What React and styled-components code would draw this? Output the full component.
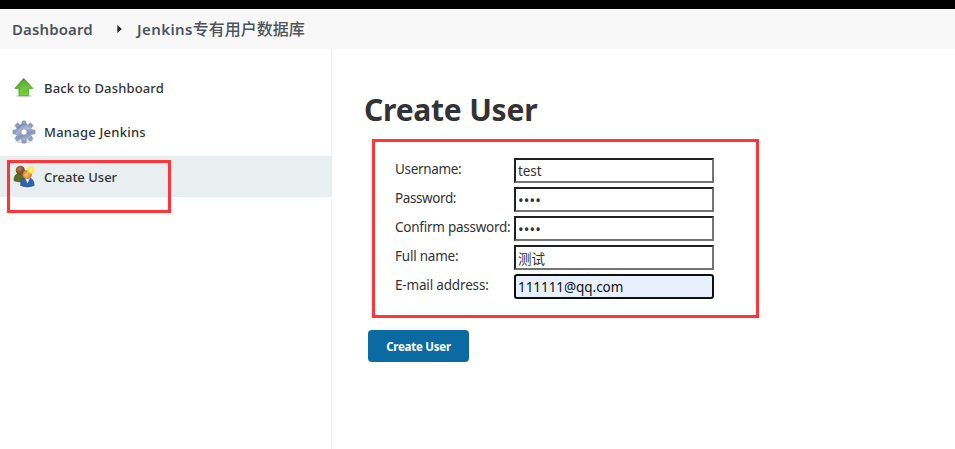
import React from "react";
import styled, { createGlobalStyle } from "styled-components";

const GlobalStyle = createGlobalStyle`
  * { box-sizing: border-box; }
  body {
    margin: 0;
    background: #fff;
    color: #333;
    font-family: "Noto Sans", "Noto Sans CJK SC", sans-serif;
    overflow: hidden;
  }
`;

const Page = styled.div`
  display: flex;
  flex-direction: column;
  height: 449px;
`;

const TopBar = styled.div`
  height: 9px;
  flex: none;
  background: #000;
`;

const Breadcrumbs = styled.nav`
  display: flex;
  align-items: center;
  flex: none;
  height: 40px;
  padding-left: 12px;
  background: #f8f8f8;
  color: #4d545d;
`;

const Crumb = styled.span`
  display: flex;
  width: ${(p) => p.$width}px;
  font-size: 15px;
  font-weight: 600;
  line-height: 20px;
  letter-spacing: ${(p) => p.$spacing || 0}px;
  white-space: nowrap;
`;

const CrumbCjk = styled.span`
  font-family: "Noto Sans CJK SC", sans-serif;
  font-size: 16px;
  font-weight: 500;
  line-height: 18px;
  letter-spacing: 0;
`;

const CrumbArrow = styled.svg`
  flex: none;
  width: 5px;
  height: 8px;
  margin: 0 15px 0 24px;
`;

const Body = styled.div`
  display: flex;
  flex: 1;
`;

const Sidebar = styled.aside`
  width: 332px;
  padding-top: 18px;
  border-right: 1px solid #ececec;
`;

const Task = styled.a`
  position: relative;
  display: flex;
  align-items: center;
  height: 41px;
  margin-bottom: ${(p) => p.$gap || 0}px;
  padding-left: 12px;
  background: ${(p) => (p.$active ? "#e9eef1" : "transparent")};
`;

const TaskIcon = styled.svg`
  flex: none;
  width: 24px;
  height: 24px;
  margin-right: 8px;
`;

const TaskText = styled.span`
  font-size: 13px;
  font-weight: 500;
  line-height: 20px;
  letter-spacing: ${(p) => p.$spacing || 0}px;
`;

const Marker = styled.div`
  position: absolute;
  left: 7px;
  top: 4px;
  width: 164px;
  height: 53px;
  border: 3px solid #ff3538;
`;

const Main = styled.main`
  flex: 1;
  padding: 38px 0 0 32px;
`;

const Title = styled.h1`
  margin: 0 0 6px;
  font-size: 30px;
  font-weight: 700;
  line-height: 46px;
  letter-spacing: -0.22px;
`;

const Form = styled.form`
  width: 387px;
  height: 179px;
  margin-left: 8px;
  padding: 16px 0 0 20px;
  border: 3px solid #ff3538;
`;

const Field = styled.label`
  display: grid;
  grid-template-columns: 119px 200px;
  height: 29px;
`;

const FieldLabel = styled.span`
  font-size: 13.5px;
  line-height: 22px;
  letter-spacing: ${(p) => p.$spacing || 0}px;
  white-space: nowrap;
`;

const Input = styled.input`
  width: 200px;
  height: 25px;
  padding: 0 2px;
  border: 2px solid;
  border-color: #202124 #747474 #747474 #202124;
  border-radius: 0;
  outline: none;
  background: #fff;
  color: #333;
  font: 400 13.5px "Noto Sans", "Noto Sans CJK SC", sans-serif;
  letter-spacing: ${(p) => p.$spacing || 0}px;
  &[type="password"] {
    font-size: 15px;
    letter-spacing: 0.1px;
  }
  ${(p) =>
    p.$focused &&
    `
    background: #e8f0fe;
    border-color: #101010;
    border-radius: 3px;
    color: #111;
  `}
`;

const SubmitButton = styled.button`
  width: 101px;
  height: 32px;
  margin: 12px 0 0 4px;
  padding: 1px 0 0;
  border: 0;
  border-radius: 4px;
  background: #0b6aa2;
  color: #fff;
  font: 700 11.5px "Noto Sans", sans-serif;
  letter-spacing: -0.25px;
`;

const UpArrowIcon = () => (
  <TaskIcon viewBox="0 0 24 24">
    <defs>
      <linearGradient id="up" x1="0" y1="0" x2="0.3" y2="1">
        <stop offset="0" stopColor="#3d9410" />
        <stop offset="0.45" stopColor="#4fae1c" />
        <stop offset="1" stopColor="#7ad336" />
      </linearGradient>
    </defs>
    <ellipse cx="12" cy="20" rx="8.5" ry="1.5" fill="#000" opacity="0.15" />
    <path d="M11.7 2.3 L20.9 12.4 H16.7 V19.6 H6.9 V12.4 H2.8 Z" fill="url(#up)" stroke="#479a20" strokeWidth="0.7" strokeLinejoin="round" />
    <path d="M11.7 3.8 L18.6 11.5 H15.7 V13 Q11 13 8 17 V11.5 H5 Z" fill="#fff" opacity="0.12" />
  </TaskIcon>
);

const teeth = [0, 45, 90, 135, 180, 225, 270, 315];

const GearIcon = () => (
  <TaskIcon viewBox="0 0 24 24">
    <defs>
      <linearGradient id="gear" x1="0.2" y1="0" x2="0.6" y2="1">
        <stop offset="0" stopColor="#66789f" />
        <stop offset="0.45" stopColor="#a4b2d7" />
        <stop offset="0.7" stopColor="#8591b8" />
        <stop offset="1" stopColor="#b4b8d2" />
      </linearGradient>
    </defs>
    <ellipse cx="12" cy="21.3" rx="9" ry="2" fill="#000" opacity="0.12" />
    <g fill="#929fc3" stroke="#7885aa" strokeWidth="0.5">
      {teeth.map((a) => (
        <path key={a} d="M9.5 5.5 L10.1 1.2 Q12 0.2 13.9 1.2 L14.5 5.5 Z" transform={`rotate(${a} 12 12)`} />
      ))}
    </g>
    <circle cx="12" cy="12" r="8.1" fill="url(#gear)" />
    <path d="M5.5 13 Q6 6.5 12 5 Q17 5 18.5 9 Q11 8 5.5 13Z" fill="#fff" opacity="0.17" />
    <circle cx="12" cy="12" r="3.2" fill="#fff" stroke="#7683a8" strokeWidth="0.7" />
  </TaskIcon>
);

const UsersIcon = () => (
  <TaskIcon viewBox="0 0 24 24">
    <defs>
      <radialGradient id="glow">
        <stop offset="0" stopColor="#fffbb0" />
        <stop offset="0.5" stopColor="#ffe83d" />
        <stop offset="1" stopColor="#ffe23a" stopOpacity="0" />
      </radialGradient>
      <radialGradient id="brown" cx="0.4" cy="0.35">
        <stop offset="0" stopColor="#b18150" />
        <stop offset="1" stopColor="#7a4c20" />
      </radialGradient>
      <radialGradient id="orange" cx="0.4" cy="0.55">
        <stop offset="0" stopColor="#ffc67a" />
        <stop offset="1" stopColor="#d07820" />
      </radialGradient>
    </defs>
    <path d="M2 15.8 Q1.8 8.5 7.5 8.5 Q13 9 13.5 16 Q8 18 2 15.8Z" fill="#596c28" stroke="#435419" strokeWidth="0.6" />
    <circle cx="8.3" cy="5.3" r="4.6" fill="url(#brown)" />
    <path d="M8.6 20.5 Q8 12.8 15 12.5 Q22.4 12.8 22.2 20.5 Q15.5 23.5 8.6 20.5Z" fill="#2d63ae" stroke="#244f93" strokeWidth="0.6" />
    <path d="M13 13 L15.5 18.5 L18 13Z" fill="#e2ecf8" />
    <circle cx="15.3" cy="9.5" r="4.6" fill="url(#orange)" />
    <circle cx="18.8" cy="5.2" r="4.7" fill="url(#glow)" />
  </TaskIcon>
);

const fields = [
  { label: "Username:", spacing: -0.33, type: "text", value: "test", inputSpacing: -0.1 },
  { label: "Password:", spacing: -0.4, type: "password", value: "test" },
  { label: "Confirm password:", spacing: -0.25, type: "password", value: "test" },
  { label: "Full name:", spacing: -0.23, type: "text", value: "测试" },
  { label: "E-mail address:", spacing: -0.17, type: "text", value: "111111@qq.com", inputSpacing: -0.05, focused: true },
];

export default function App() {
  return (
    <Page>
      <GlobalStyle />
      <TopBar />
      <Breadcrumbs>
        <Crumb $width={81} $spacing={0.12}>Dashboard</Crumb>
        <CrumbArrow viewBox="0 0 5 8">
          <path d="M0.3 0 L4.8 4 L0.3 8Z" fill="#222" />
        </CrumbArrow>
        <Crumb $spacing={0.4}>
          Jenkins<CrumbCjk>专有用户数据库</CrumbCjk>
        </Crumb>
      </Breadcrumbs>
      <Body>
        <Sidebar>
          <Task $gap={3}>
            <UpArrowIcon />
            <TaskText $spacing={0.15}>Back to Dashboard</TaskText>
          </Task>
          <Task $gap={4}>
            <GearIcon />
            <TaskText $spacing={0.24}>Manage Jenkins</TaskText>
          </Task>
          <Task $active>
            <UsersIcon />
            <TaskText>Create User</TaskText>
            <Marker />
          </Task>
        </Sidebar>
        <Main>
          <Title>Create User</Title>
          <Form>
            {fields.map((f) => (
              <Field key={f.label}>
                <FieldLabel $spacing={f.spacing}>{f.label}</FieldLabel>
                <Input type={f.type} defaultValue={f.value} $spacing={f.inputSpacing} $focused={f.focused} />
              </Field>
            ))}
          </Form>
          <SubmitButton>Create User</SubmitButton>
        </Main>
      </Body>
    </Page>
  );
}
